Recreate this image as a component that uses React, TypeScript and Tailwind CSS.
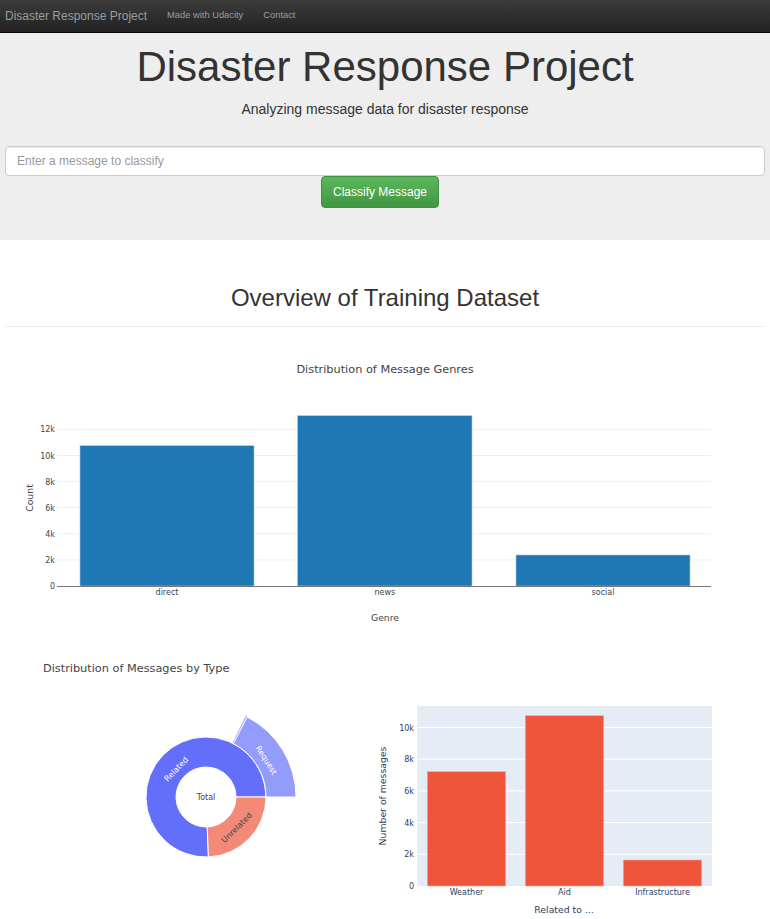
import React from 'react';

const plotFont = '"DejaVu Sans", Verdana, "Open Sans", sans-serif';

function arc(cx: number, cy: number, r0: number, r1: number, a0: number, a1: number) {
  const p = (r: number, a: number) => {
    const t = (a * Math.PI) / 180;
    return `${(cx + r * Math.cos(t)).toFixed(2)} ${(cy - r * Math.sin(t)).toFixed(2)}`;
  };
  const large = a1 - a0 > 180 ? 1 : 0;
  return `M ${p(r1, a0)} A ${r1} ${r1} 0 ${large} 0 ${p(r1, a1)} L ${p(r0, a1)} A ${r0} ${r0} 0 ${large} 1 ${p(r0, a0)} Z`;
}

function GenreChart() {
  const base = 585;
  const step = 26.1;
  const ticks = [0, 2, 4, 6, 8, 10, 12];
  const bars = [
    { label: 'direct', x0: 80, x1: 254, top: 444.7 },
    { label: 'news', x0: 297.5, x1: 472, top: 414.7 },
    { label: 'social', x0: 516, x1: 690, top: 554 },
  ];
  return (
    <svg width={770} height={304} className="block">
      <g transform="translate(0,-326)" fontFamily={plotFont}>
        <text x={385} y={372} textAnchor="middle" fontSize={11.3} fill="#444">
          Distribution of Message Genres
        </text>
        {ticks.map((t) => (
          <g key={t}>
            {t > 0 && (
              <line x1={57} x2={711} y1={base - (t / 2) * step} y2={base - (t / 2) * step} stroke="#eee" />
            )}
            <text x={55} y={base - (t / 2) * step + 3} textAnchor="end" fontSize={8} fill="#444">
              {t === 0 ? '0' : `${t}k`}
            </text>
          </g>
        ))}
        {bars.map((b) => (
          <g key={b.label}>
            <rect
              x={b.x0}
              y={b.top}
              width={b.x1 - b.x0}
              height={base - b.top}
              fill="#1f77b4"
              stroke="#a9c9e3"
              strokeWidth={0.6}
            />
            <text x={(b.x0 + b.x1) / 2} y={594} textAnchor="middle" fontSize={8} fill="#444">
              {b.label}
            </text>
          </g>
        ))}
        <line x1={57} x2={711} y1={585.5} y2={585.5} stroke="#777" />
        <text x={385} y={620} textAnchor="middle" fontSize={9.3} fill="#444">
          Genre
        </text>
        <text x={33} y={497} textAnchor="middle" fontSize={9.3} fill="#444" transform="rotate(-90 33 497)">
          Count
        </text>
      </g>
    </svg>
  );
}

function Sunburst() {
  const cx = 206;
  const cy = 796;
  return (
    <svg width={370} height={289} className="block">
      <g transform="translate(0,-630)" fontFamily={plotFont}>
        <text x={43} y={671} fontSize={11.3} fill="#444">
          Distribution of Messages by Type
        </text>
        <path d={arc(cx, cy, 30, 60, 0, 272.3)} fill="#636efa" stroke="#fff" strokeWidth={1} />
        <path d={arc(cx, cy, 30, 60, -87.7, 0)} fill="#f38a78" stroke="#fff" strokeWidth={1} />
        <path d={arc(cx, cy, 60, 90, 0, 62.8)} fill="#949cfb" stroke="#fff" strokeWidth={1} />
        <path d={arc(cx, cy, 60, 91, 62.8, 64.2)} fill="#b9befc" stroke="#fff" strokeWidth={0.5} />
        <text x={206} y={799} textAnchor="middle" fontSize={8} fill="#444">
          Total
        </text>
        <text x={176} y={771} textAnchor="middle" fontSize={8} fill="#fff" transform="rotate(-46 176 768)">
          Related
        </text>
        <text x={266.5} y={762} textAnchor="middle" fontSize={8} fill="#fff" transform="rotate(57 266.5 759)">
          Request
        </text>
        <text x={236.5} y={829.5} textAnchor="middle" fontSize={8} fill="#444" transform="rotate(-45 236.5 826.5)">
          Unrelated
        </text>
      </g>
    </svg>
  );
}

function RelatedChart() {
  const base = 885;
  const step = 31.7;
  const ticks = [0, 2, 4, 6, 8, 10];
  const bars = [
    { label: 'Weather', x0: 427.3, x1: 505.7, top: 770.7 },
    { label: 'Aid', x0: 525.3, x1: 603.7, top: 714.7 },
    { label: 'Infrastructure', x0: 623.3, x1: 701.7, top: 859 },
  ];
  return (
    <svg width={400} height={289} className="block">
      <g transform="translate(-370,-630)" fontFamily={plotFont}>
        <rect x={417.3} y={705} width={294.7} height={180} fill="#e5ecf6" />
        {ticks.map((t) => (
          <g key={t}>
            {t > 0 && (
              <line x1={417.3} x2={712} y1={base - (t / 2) * step} y2={base - (t / 2) * step} stroke="#fff" />
            )}
            <text x={414} y={base - (t / 2) * step + 3} textAnchor="end" fontSize={8} fill="#2a3f5f">
              {t === 0 ? '0' : `${t}k`}
            </text>
          </g>
        ))}
        {bars.map((b) => (
          <g key={b.label}>
            <rect
              x={b.x0}
              y={b.top}
              width={b.x1 - b.x0}
              height={base - b.top}
              fill="#ef553b"
              stroke="#f5a89b"
              strokeWidth={0.6}
            />
            <text x={(b.x0 + b.x1) / 2} y={894} textAnchor="middle" fontSize={8} fill="#2a3f5f">
              {b.label}
            </text>
          </g>
        ))}
        <text x={564} y={912} textAnchor="middle" fontSize={9.3} fill="#2a3f5f">
          Related to ...
        </text>
        <text x={386} y={795} textAnchor="middle" fontSize={9.3} fill="#2a3f5f" transform="rotate(-90 386 795)">
          Number of messages
        </text>
      </g>
    </svg>
  );
}

export default function App() {
  return (
    <div className="w-[770px] min-h-[919px] bg-white font-['Liberation_Sans',Arial,sans-serif] text-[#333]">
      <nav className="h-[33px] flex items-center bg-gradient-to-b from-[#3c3c3c] to-[#222] border-b border-[#080808]">
        <span className="pl-[5px] pr-[10px] text-[12px] text-[#9d9d9d]">Disaster Response Project</span>
        <span className="px-[10px] text-[9.33px] text-[#9d9d9d]">Made with Udacity</span>
        <span className="px-[10px] text-[9.33px] text-[#9d9d9d]">Contact</span>
      </nav>

      <div className="bg-[#eee] px-[5px] pt-[11px] pb-[32px]">
        <h1 className="text-center text-[42px] leading-[1.1] text-[#333]">Disaster Response Project</h1>
        <p className="mt-[9px] text-center text-[14px] leading-[20px] text-[#333]">
          Analyzing message data for disaster response
        </p>
        <div className="mt-[27px] flex flex-col">
          <input
            className="w-full h-[30px] rounded-[4px] border border-[#ccc] bg-white px-[11px] text-[12px] shadow-[inset_0_1px_1px_rgba(0,0,0,0.075)] outline-none placeholder:text-[#999]"
            placeholder="Enter a message to classify"
          />
          <div className="flex justify-center pr-[10px]">
            <button className="h-[32px] px-[11px] rounded-[4px] border border-[#3e8f3e] bg-gradient-to-b from-[#5cb85c] to-[#419641] text-[12px] text-white">
              Classify Message
            </button>
          </div>
        </div>
      </div>

      <div className="px-[5px]">
        <h1 className="mt-[45px] text-center text-[24px] leading-[1.1] text-[#333]">Overview of Training Dataset</h1>
        <hr className="mt-[14px] border-0 border-t border-[#eee]" />
      </div>

      <GenreChart />
      <div className="flex">
        <Sunburst />
        <RelatedChart />
      </div>
    </div>
  );
}
